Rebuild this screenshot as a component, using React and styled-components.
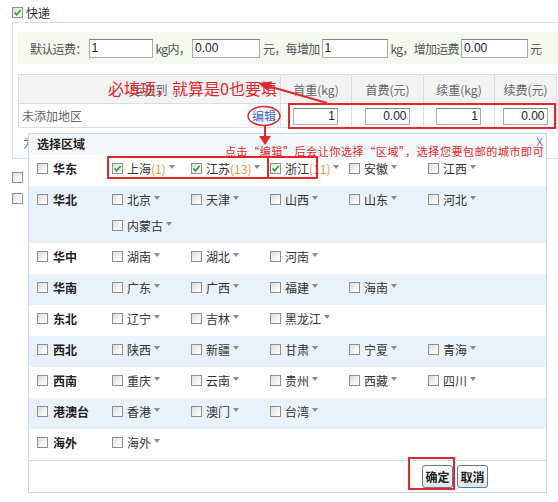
import styled, { createGlobalStyle } from 'styled-components';

const GlobalStyle = createGlobalStyle`
  body {
    margin: 0;
    background: #fff;
    font-family: 'Noto Sans CJK SC', 'Liberation Sans', sans-serif;
    font-size: 12px;
    color: #333;
  }
`;

const regions = [
  { name: '华东', cities: [['上海', 1, true], ['江苏', 13, true], ['浙江', 11, true], ['安徽'], ['江西']] },
  { name: '华北', cities: [['北京'], ['天津'], ['山西'], ['山东'], ['河北'], ['内蒙古']] },
  { name: '华中', cities: [['湖南'], ['湖北'], ['河南']] },
  { name: '华南', cities: [['广东'], ['广西'], ['福建'], ['海南']] },
  { name: '东北', cities: [['辽宁'], ['吉林'], ['黑龙江']] },
  { name: '西北', cities: [['陕西'], ['新疆'], ['甘肃'], ['宁夏'], ['青海']] },
  { name: '西南', cities: [['重庆'], ['云南'], ['贵州'], ['西藏'], ['四川']] },
  { name: '港澳台', cities: [['香港'], ['澳门'], ['台湾']] },
  { name: '海外', cities: [['海外']] },
];

const columns = [262, 71, 72, 71, 62];

const Page = styled.div`
  position: relative;
  width: 558px;
  height: 502px;
  overflow: hidden;
  box-sizing: border-box;
  padding: 7px 0 0 12px;
`;

const CheckLine = styled.div`
  display: flex;
  align-items: center;
  gap: ${(p) => p.$gap || 3}px;
  height: 11px;
  margin-top: ${(p) => p.$top || 0}px;
`;

const Box = styled.span`
  box-sizing: border-box;
  display: inline-flex;
  align-items: center;
  justify-content: center;
  flex: none;
  width: 11px;
  height: 11px;
  border: 1px solid #8e8f8f;
  background: linear-gradient(135deg, #dcdcdc 0%, #f4f4f4 60%, #fff 100%);
`;

const Panel = styled.div`
  box-sizing: border-box;
  margin-top: 4px;
  width: 560px;
  height: 137px;
  border: 1px solid #d3dfed;
  padding: 9px 0 0 5px;
`;

const DefaultRow = styled.div`
  display: flex;
  align-items: center;
  height: 32px;
  padding-left: 12px;
  background: #f5f9ef;
  color: #555;
  letter-spacing: -0.7px;
`;

const Field = styled.input`
  box-sizing: border-box;
  width: ${(p) => p.$w || 64}px;
  height: ${(p) => p.$h || 19}px;
  margin: 0 ${(p) => p.$mr ?? 3}px 0 2px;
  padding: 0 2px;
  border: 1px solid #a5acb2;
  border-top-color: #7c858d;
  font-family: 'Liberation Sans', sans-serif;
  font-size: 12px;
  letter-spacing: 0;
  color: #222;
  text-align: ${(p) => p.$align || 'left'};
  outline: none;
`;

const Table = styled.table`
  margin-top: 10px;
  width: 538px;
  border-collapse: collapse;
  table-layout: fixed;
`;

const Col = styled.col`
  width: ${(p) => p.$w}px;
`;

const Th = styled.th`
  height: 28px;
  padding: 0;
  border: 1px solid #dcdcdc;
  background: #f3f3f3;
  font-weight: normal;
  color: #666;
`;

const Td = styled.td`
  height: 23px;
  border: 1px solid #dcdcdc;
  text-align: center;
  padding: 0;
  color: #666;
`;

const AreaCell = styled.div`
  display: flex;
  justify-content: space-between;
  padding: 0 4px 0 3px;
`;

const Link = styled.a`
  color: #3c6ac8;
  text-decoration: none;
`;

const AddLink = styled(Link)`
  display: block;
  margin: 8px 0 0 5px;
  line-height: 14px;
`;

const Popup = styled.div`
  position: absolute;
  left: 28px;
  top: 133px;
  width: 519px;
  height: 360px;
  box-sizing: border-box;
  border: 1px solid #c9d6e4;
  background: #fff;
  display: flex;
  flex-direction: column;
`;

const PopHead = styled.div`
  display: flex;
  justify-content: space-between;
  height: 21px;
  padding: 0 0 0 8px;
  background: #f6f7f9;
  line-height: 20px;
  font-weight: bold;
  color: #222;
`;

const Close = styled.span`
  font-family: 'Liberation Sans', sans-serif;
  font-weight: normal;
  font-size: 10px;
  line-height: 10px;
  color: #5a72d0;
  margin: 4px 3px 0 0;
`;

const RegionRow = styled.div`
  display: flex;
  padding: 0 0 5px 8px;
  background: ${(p) => (p.$alt ? '#e9f1fb' : '#fff')};
`;

const RegionLabel = styled.label`
  display: flex;
  align-items: center;
  gap: 5px;
  width: 75px;
  height: 26px;
  font-weight: bold;
  color: #222;
  flex: none;
`;

const Cities = styled.div`
  display: flex;
  flex-wrap: wrap;
  width: 400px;
`;

const City = styled.label`
  display: flex;
  align-items: center;
  width: 79px;
  height: 26px;
  color: #333;
`;

const CityName = styled.span`
  margin-left: 4px;
`;

const Count = styled.span`
  color: #e8923a;
`;

const Caret = styled.span`
  margin-left: 3px;
  width: 0;
  height: 0;
  border-left: 3px solid transparent;
  border-right: 3px solid transparent;
  border-top: 4px solid #8a8a8a;
  margin-top: -3px;
`;

const PopFoot = styled.div`
  flex: 1;
  display: flex;
  justify-content: flex-end;
  align-items: center;
  gap: 4px;
  padding-right: 58px;
  border-top: 1px solid #d3dce6;
`;

const Button = styled.button`
  box-sizing: border-box;
  width: 31px;
  height: 23px;
  padding: 0;
  border: 1px solid #5f7d9d;
  border-radius: 3px;
  background: linear-gradient(#ffffff, #dfe5ec);
  font-family: 'Noto Sans CJK SC', sans-serif;
  font-size: 12px;
  font-weight: bold;
  color: #222;
`;

const Note = styled.div`
  position: absolute;
  left: ${(p) => p.$x}px;
  top: ${(p) => p.$y}px;
  color: #e2262b;
  font-size: ${(p) => p.$size}px;
  letter-spacing: ${(p) => p.$ls || 0}px;
  line-height: 1.2;
  white-space: nowrap;
  pointer-events: none;
`;

const Marks = styled.svg`
  position: absolute;
  left: 0;
  top: 0;
  pointer-events: none;
`;

function Check({ on }) {
  return (
    <Box>
      {on && (
        <svg width="9" height="9" viewBox="0 0 9 9">
          <path d="M1.5 4.5 L3.6 6.7 L7.6 2" fill="none" stroke="#2a9a2a" strokeWidth="1.6" />
        </svg>
      )}
    </Box>
  );
}

export default function App() {
  return (
    <Page>
      <GlobalStyle />
      <CheckLine>
        <Check on />
        <span>快递</span>
      </CheckLine>

      <Panel>
        <DefaultRow>
          默认运费：<Field defaultValue="1" $w={64} />
          kg内，<Field defaultValue="0.00" $w={68} />
          元，每增加<Field defaultValue="1" $w={66} />
          kg，增加运费<Field defaultValue="0.00" $w={67} $mr={2} />元
        </DefaultRow>

        <Table>
          <colgroup>
            {columns.map((w, i) => (
              <Col key={i} $w={w} />
            ))}
          </colgroup>
          <thead>
            <tr>
              <Th>运送到</Th>
              <Th>首重(kg)</Th>
              <Th>首费(元)</Th>
              <Th>续重(kg)</Th>
              <Th>续费(元)</Th>
            </tr>
          </thead>
          <tbody>
            <tr>
              <Td>
                <AreaCell>
                  <span>未添加地区</span>
                  <Link>编辑</Link>
                </AreaCell>
              </Td>
              <Td><Field defaultValue="1" $w={45} $h={17} $align="right" /></Td>
              <Td><Field defaultValue="0.00" $w={45} $h={17} $align="right" /></Td>
              <Td><Field defaultValue="1" $w={45} $h={17} $align="right" /></Td>
              <Td><Field defaultValue="0.00" $w={45} $h={17} $align="right" /></Td>
            </tr>
          </tbody>
        </Table>
        <AddLink>为指定地区城市设置运费</AddLink>
      </Panel>

      <CheckLine $top={13} $gap={12}>
        <Check />
        <span>EMS</span>
      </CheckLine>
      <CheckLine $top={10} $gap={12}>
        <Check />
        <span>平邮</span>
      </CheckLine>

      <Popup>
        <PopHead>
          <span>选择区域</span>
          <Close>X</Close>
        </PopHead>
        {regions.map((r, i) => (
          <RegionRow key={r.name} $alt={i % 2 === 1}>
            <RegionLabel>
              <Check />
              {r.name}
            </RegionLabel>
            <Cities>
              {r.cities.map(([name, count, on]) => (
                <City key={name}>
                  <Check on={on} />
                  <CityName>{name}</CityName>
                  {count && <Count>({count})</Count>}
                  <Caret />
                </City>
              ))}
            </Cities>
          </RegionRow>
        ))}
        <PopFoot>
          <Button>确定</Button>
          <Button>取消</Button>
        </PopFoot>
      </Popup>

      <Note $x={108} $y={79} $size={16}>必填项，就算是0也要填</Note>
      <Note $x={225} $y={145} $size={11} $ls={0.6}>点击“编辑”后会让你选择“区域”，选择您要包邮的城市即可</Note>

      <Marks width="558" height="502" viewBox="0 0 558 502">
        <g fill="none" stroke="#e0282c" strokeWidth="2">
          <rect x="289" y="104" width="266" height="24" />
          <rect x="108" y="157" width="209" height="21" />
          <rect x="268" y="157" width="49" height="21" />
          <rect x="409" y="458" width="45" height="31" />
          <ellipse cx="264" cy="116" rx="16" ry="9.5" strokeWidth="1.5" />
          <line x1="327" y1="103" x2="268" y2="86" />
          <line x1="265" y1="126" x2="265" y2="137" />
        </g>
        <g fill="#e0282c">
          <polygon points="258,83 271,81.5 268,91" />
          <polygon points="259,136 271,136 265,145" />
        </g>
      </Marks>
    </Page>
  );
}
